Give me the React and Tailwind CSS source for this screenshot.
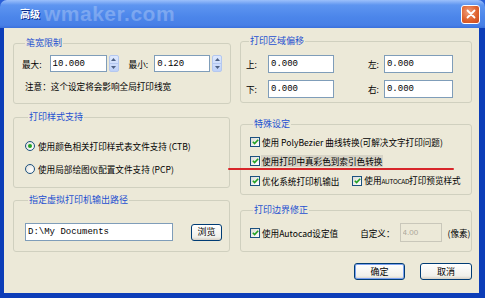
import React from 'react';

const inputCls =
  'h-[17px] border border-[#7f9db9] bg-white px-[2px] font-["Liberation_Mono",monospace] text-[9px] leading-[15px] text-black';

function Spinner() {
  return (
    <div className="ml-[2px] flex h-[17px] w-[10px] shrink-0 flex-col overflow-hidden rounded-[2px] border border-[#b4c8f0] bg-[linear-gradient(180deg,#dfe9fd,#bfd2f8)]">
      <div className="flex flex-1 items-center justify-center border-b border-[#b4c8f0]">
        <svg width="5" height="3" viewBox="0 0 5 3">
          <path d="M0 3 L2.5 0 L5 3 Z" fill="#4d6185" />
        </svg>
      </div>
      <div className="flex flex-1 items-center justify-center">
        <svg width="5" height="3" viewBox="0 0 5 3">
          <path d="M0 0 L2.5 3 L5 0 Z" fill="#4d6185" />
        </svg>
      </div>
    </div>
  );
}

function Radio({ checked }) {
  return (
    <span className="flex h-[10px] w-[10px] shrink-0 items-center justify-center rounded-full border border-[#1c5180] bg-[radial-gradient(circle_at_65%_65%,#ffffff,#dcdcd5)]">
      {checked && <span className="h-[4px] w-[4px] rounded-full bg-[#21a121]" />}
    </span>
  );
}

function Check({ checked = true }) {
  return (
    <span className="flex h-[10px] w-[10px] shrink-0 items-center justify-center border border-[#1c5180] bg-[linear-gradient(135deg,#dcdcd5,#ffffff)]">
      {checked && (
        <svg width="7" height="6" viewBox="0 0 7 6">
          <path d="M0.8 2.8 L2.6 4.6 L6.2 0.8" stroke="#21a121" strokeWidth="1.6" fill="none" />
        </svg>
      )}
    </span>
  );
}

function Group({ title, className, children }) {
  return (
    <fieldset className={`rounded-[3px] border border-[#d0d0bf] ${className}`}>
      <legend className="ml-[3px] px-[1px] text-[9px] leading-[12px] text-[#1f50d0]">{title}</legend>
      {children}
    </fieldset>
  );
}

function XpButton({ children, isDefault }) {
  return (
    <button
      type="button"
      className={`flex h-[17px] w-full items-center justify-center rounded-[3px] border border-[#003c74] bg-[linear-gradient(180deg,#ffffff,#f0f0ea_80%,#d6d0c5)] text-[9px] leading-[12px] text-black ${
        isDefault ? 'shadow-[inset_0_0_0_1px_#7ba1ef]' : ''
      }`}
    >
      {children}
    </button>
  );
}

export default function App() {
  return (
    <div className="relative flex h-[298px] w-[485px] flex-col overflow-hidden whitespace-nowrap bg-[#2a5fd8] font-['Noto_Sans_CJK_SC',sans-serif]">
      {/* title bar */}
      <div className="relative flex h-[28px] shrink-0 items-center rounded-t-[7px] bg-[linear-gradient(180deg,#9cc0fb_0%,#5e95f0_18%,#4c86ea_60%,#477fe6_90%,#3a70dc_100%)] pl-[20px]">
        <span className="pointer-events-none absolute left-[44px] top-[2px] font-['Liberation_Sans',sans-serif] text-[21px] font-bold leading-[24px] tracking-[0.5px] text-white/25">
          wmaker.com
        </span>
        <span className="relative text-[10px] font-bold leading-[14px] text-white [text-shadow:1px_1px_0_#0a2a8a]">高级</span>
        <div className="ml-auto mr-[5px] flex h-[19px] w-[19px] items-center justify-center rounded-[3px] border border-white bg-[radial-gradient(circle_at_40%_35%,#f0a080,#e0632e_55%,#c8461e)]">
          <svg width="10" height="10" viewBox="0 0 10 10">
            <path d="M1.5 1.5 L8.5 8.5 M8.5 1.5 L1.5 8.5" stroke="white" strokeWidth="1.8" strokeLinecap="round" />
          </svg>
        </div>
      </div>

      {/* body */}
      <div className="flex flex-1 border-b-[5px] border-l-[4px] border-r-[6px] border-[#0c3db8] bg-[#ece9d8] pl-[9px] pt-[7px] text-[8.6px] leading-[12px] text-black">
        {/* left column */}
        <div className="flex w-[217px] shrink-0 flex-col pt-[2px]">
          <Group title="笔宽限制" className="h-[67px] px-[8px]">
            <div className="mt-[6px] flex items-center">
              <span>最大:</span>
              <input readOnly value="10.000" className={`${inputCls} ml-[8px] w-[57px]`} />
              <Spinner />
              <span className="ml-[10px]">最小:</span>
              <input readOnly value="0.120" className={`${inputCls} ml-[6px] w-[56px]`} />
              <Spinner />
            </div>
            <div className="mt-[8px] pl-[3px]">注意：这个设定将会影响全局打印线宽</div>
          </Group>

          <Group title="打印样式支持" className="mt-[7px] h-[77px] pl-[11px]">
            <div className="mt-[17px] flex items-center gap-[3px]">
              <Radio checked />
              <span>使用颜色相关打印样式表文件支持 (CTB)</span>
            </div>
            <div className="mt-[11px] flex items-center gap-[3px]">
              <Radio />
              <span>使用局部绘图仪配置文件支持 (PCP)</span>
            </div>
          </Group>

          <Group title="指定虚拟打印机输出路径" className="mt-[6px] h-[58px] pl-[11px]">
            <div className="mt-[17px] flex items-center">
              <input
                readOnly
                value="D:\My Documents"
                className={`${inputCls} h-[18px] w-[148px] text-[8.5px]`}
              />
              <div className="ml-[18px] w-[31px]">
                <XpButton>浏览</XpButton>
              </div>
            </div>
          </Group>
        </div>

        {/* right column */}
        <div className="ml-[10px] flex w-[232px] shrink-0 flex-col">
          <Group title="打印区域偏移" className="h-[68px] pl-[5px]">
            <div className="mt-[8px] flex items-center">
              <span>上:</span>
              <input readOnly value="0.000" className={`${inputCls} ml-[11px] h-[18px] w-[66px]`} />
              <span className="ml-[34px]">左:</span>
              <input readOnly value="0.000" className={`${inputCls} ml-[5px] h-[18px] w-[69px]`} />
            </div>
            <div className="mt-[7px] flex items-center">
              <span>下:</span>
              <input readOnly value="0.000" className={`${inputCls} ml-[11px] h-[18px] w-[66px]`} />
              <span className="ml-[34px]">右:</span>
              <input readOnly value="0.000" className={`${inputCls} ml-[5px] h-[18px] w-[69px]`} />
            </div>
          </Group>

          <Group title="特殊设定" className="mt-[15px] h-[77px] pl-[9px]">
            <div className="mt-[6px] flex items-center gap-[2px]">
              <Check />
              <span>使用 PolyBezier 曲线转换(可解决文字打印问题)</span>
            </div>
            <div className="relative mt-[7px] flex items-center gap-[1px]">
              <Check />
              <span className="bg-[#d6d3c6] px-[1px]">使用打印中真彩色到索引色转换</span>
              <div className="pointer-events-none absolute left-[-22px] top-[13px] h-[2px] w-[226px] rounded-full bg-[#d8262a]" />
            </div>
            <div className="mt-[7px] flex items-center gap-[2px]">
              <Check />
              <span>优化系统打印机输出</span>
              <span className="ml-[11px]">
                <Check />
              </span>
              <span>
                使用<span className="text-[6.5px] tracking-[-0.3px]">AUTOCAD</span>打印预览样式
              </span>
            </div>
          </Group>

          <Group title="打印边界修正" className="mt-[9px] h-[48px] pl-[9px]">
            <div className="mt-[7px] flex items-center">
              <Check />
              <span className="ml-[2px]">使用Autocad设定值</span>
              <span className="ml-[22px]">自定义：</span>
              <input
                readOnly
                value="4.00"
                className="ml-[5px] h-[19px] w-[42px] border border-[#c9c7ba] bg-[#ece9d8] px-[2px] font-['Liberation_Sans',sans-serif] text-[8px] text-[#aca899]"
              />
              <span className="ml-[6px]">(像素)</span>
            </div>
          </Group>

          <div className="mt-[11px] flex">
            <div className="ml-[114px] w-[51px]">
              <XpButton isDefault>确定</XpButton>
            </div>
            <div className="ml-[15px] w-[52px]">
              <XpButton>取消</XpButton>
            </div>
          </div>
        </div>
      </div>
    </div>
  );
}
